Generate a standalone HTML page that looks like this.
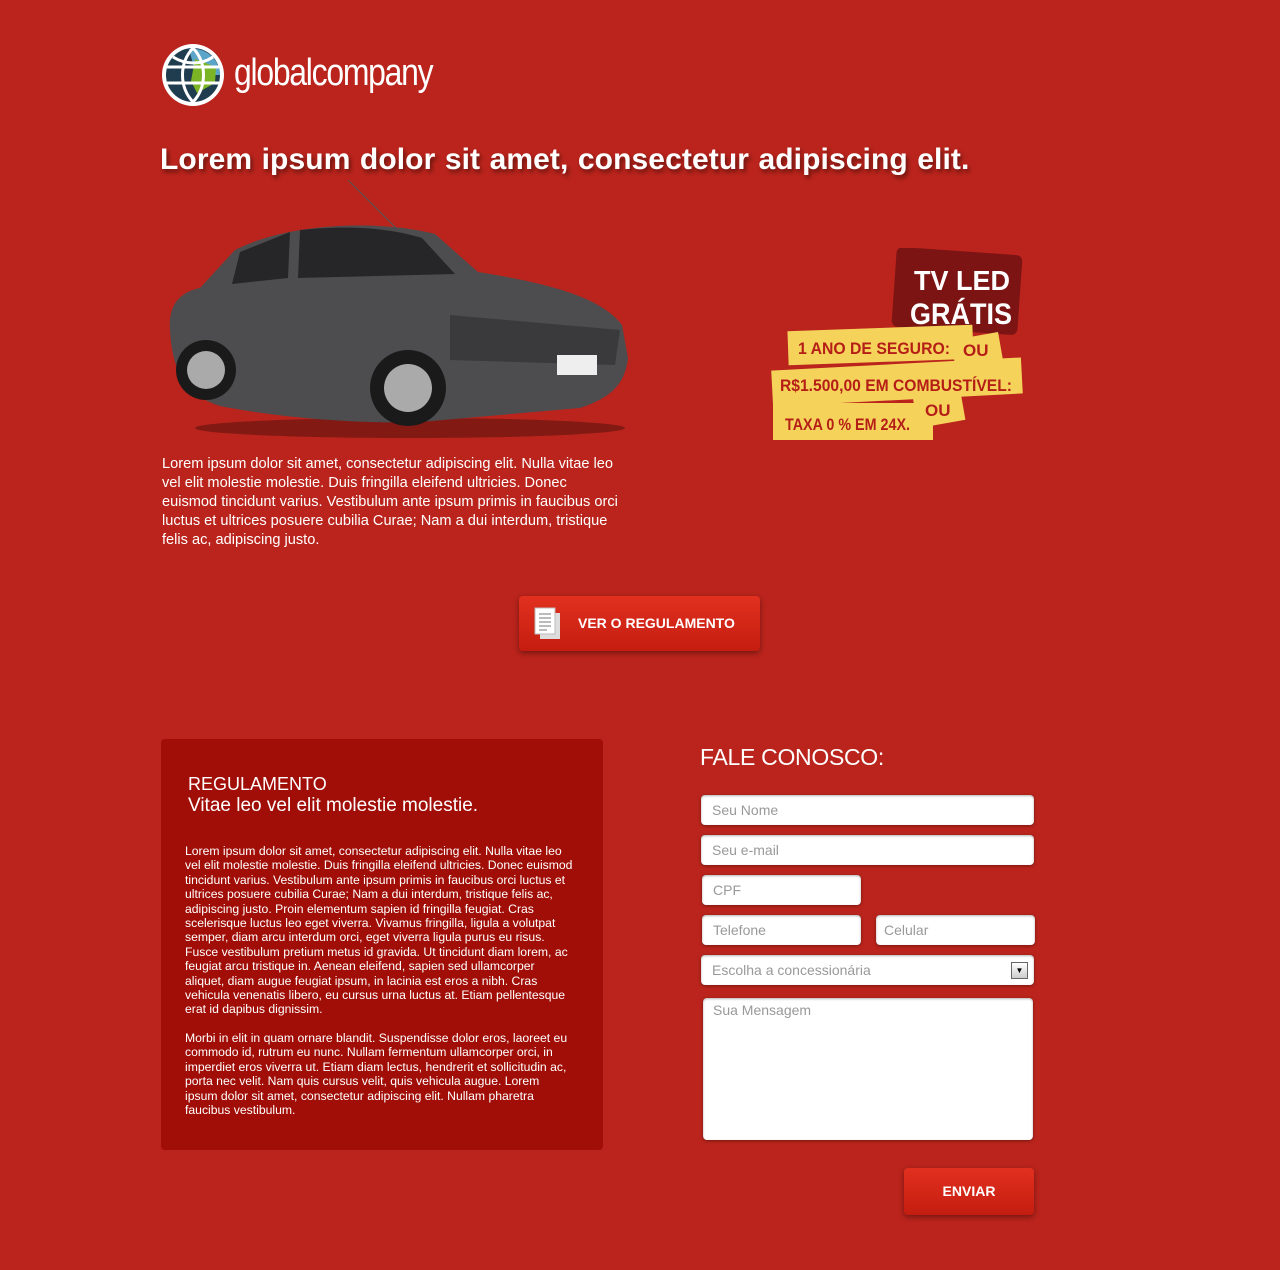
<!DOCTYPE html>
<html><head><meta charset="utf-8"><style>
*{margin:0;padding:0;box-sizing:border-box}
body{width:1280px;height:1270px;background:#ba241c;font-family:"Liberation Sans",sans-serif;color:#fff;position:relative;overflow:hidden}
.abs{position:absolute}
h1{position:absolute;left:160px;top:143px;font-size:30px;font-weight:bold;letter-spacing:0.1px;word-spacing:1px;text-shadow:2px 3px 4px rgba(0,0,0,.45);white-space:nowrap}
.intro{left:162px;top:455px;width:462px;font-size:14.6px;line-height:19px}
.btn{position:absolute;background:linear-gradient(#e2301f,#c41d10);border-radius:4px;box-shadow:0 2px 6px rgba(0,0,0,.4);font-weight:bold;font-size:14px;color:#fff}
.reg{left:161px;top:739px;width:442px;height:411px;background:#a10e07;border-radius:4px;padding:34px 26px 0 27px}
.reg h3{font-weight:normal;font-size:18px;line-height:22px}
.reg h4{font-weight:normal;font-size:19px;line-height:22px}
.reg p{font-size:12.2px;line-height:14.4px;margin-left:-3px;width:388px}
.in{position:absolute;background:#fff;border-radius:4px;box-shadow:inset 0 1px 2px rgba(0,0,0,.3),0 1px 3px rgba(0,0,0,.35);color:#999;font-size:14px;padding:0 0 0 11px;line-height:30px}
.pt{font-family:"Liberation Sans Narrow","Liberation Sans",sans-serif}
</style></head><body>
<svg class="abs" style="left:161px;top:43px" width="66" height="66" viewBox="0 0 66 66">
<circle cx="32" cy="32" r="31" fill="#fff"/>
<circle cx="32" cy="32" r="27" fill="#1f3d4f"/>
<path d="M28 6 A27 27 0 0 1 59 32 L35 32 Z" fill="#5ba6c8"/>
<path d="M34 16 L55 24 L54 40 L36 50 L30 38 Z" fill="#7bb526"/>
<path d="M32 5 C18 20 18 44 32 59 M32 5 C46 20 46 44 32 59 M6 24 H58 M6 40 H58 M12 14 C25 22 40 22 52 14" stroke="#fff" stroke-width="3" fill="none"/>
</svg>
<div class="abs" style="left:234px;top:52px;font-size:38px;letter-spacing:-1.5px;font-family:'Liberation Sans Narrow','Liberation Sans',sans-serif;transform:scaleX(.84);transform-origin:left">globalcompany</div>
<h1>Lorem ipsum dolor sit amet, consectetur adipiscing elit.</h1>
<svg class="abs" style="left:160px;top:180px" width="475" height="265" viewBox="0 0 475 265">
<line x1="188" y1="0" x2="240" y2="52" stroke="#555" stroke-width="1"/>
<ellipse cx="250" cy="248" rx="215" ry="10" fill="rgba(0,0,0,.3)"/>
<path d="M10 150 C8 125 20 112 40 108 L75 70 C130 42 220 40 275 54 L318 92 C380 102 440 115 462 145 L468 178 C465 205 450 218 420 228 L260 242 C200 244 120 238 60 226 C25 215 12 190 10 150 Z" fill="#4d4d4f"/>
<path d="M80 72 L130 52 L128 98 L72 104 Z M140 50 C190 45 230 48 262 58 L295 94 L138 98 Z" fill="#262628"/>
<path d="M290 135 L460 150 L455 185 L290 180 Z" fill="#3a3a3c"/>
<rect x="397" y="175" width="40" height="20" fill="#eee"/>
<circle cx="46" cy="190" r="30" fill="#1a1a1a"/><circle cx="46" cy="190" r="19" fill="#aaa"/>
<circle cx="248" cy="208" r="38" fill="#1a1a1a"/><circle cx="248" cy="208" r="24" fill="#aaa"/>
</svg>
<svg class="abs" style="left:770px;top:248px" width="260" height="200" viewBox="0 0 260 200">
<rect x="124" y="3" width="126" height="80" rx="6" fill="#7d1414" transform="rotate(4 187 43)"/>
<rect x="18" y="80" width="185" height="34" fill="#f5d35b" transform="rotate(-2 110 97)"/>
<rect x="2" y="116" width="250" height="36" fill="#f5d35b" transform="rotate(-3 127 134)"/>
<rect x="3" y="155" width="160" height="37" fill="#f5d35b"/>
<rect x="183" y="88" width="48" height="30" fill="#f5d35b" transform="rotate(-10 207 103)"/>
<rect x="145" y="146" width="48" height="30" fill="#f5d35b" transform="rotate(-10 170 160)"/>
<text x="144" y="42" font-size="28" font-weight="bold" fill="#fff" textLength="96" lengthAdjust="spacingAndGlyphs">TV LED</text>
<text x="140" y="76" font-size="30" font-weight="bold" fill="#fff" textLength="102" lengthAdjust="spacingAndGlyphs">GRÁTIS</text>
<g fill="#b51e16" font-weight="bold">
<text x="28" y="106" font-size="17" textLength="152" lengthAdjust="spacingAndGlyphs">1 ANO DE SEGURO:</text>
<text x="193" y="108" font-size="17">OU</text>
<text x="10" y="143" font-size="17" textLength="232" lengthAdjust="spacingAndGlyphs">R$1.500,00 EM COMBUSTÍVEL:</text>
<text x="15" y="182" font-size="17" textLength="125" lengthAdjust="spacingAndGlyphs">TAXA 0 % EM 24X.</text>
<text x="155" y="168" font-size="17">OU</text></g>
</svg>
<div class="abs intro">Lorem ipsum dolor sit amet, consectetur adipiscing elit. Nulla vitae leo vel elit molestie molestie. Duis fringilla eleifend ultricies. Donec euismod tincidunt varius. Vestibulum ante ipsum primis in faucibus orci luctus et ultrices posuere cubilia Curae; Nam a dui interdum, tristique felis ac, adipiscing justo.</div>
<div class="btn" style="left:519px;top:596px;width:241px;height:55px;line-height:55px;padding-left:59px">VER O REGULAMENTO</div>
<svg class="abs" style="left:534px;top:607px" width="28" height="34"><rect x="6" y="6" width="20" height="26" fill="#ddd"/><rect x="1" y="1" width="20" height="26" fill="#fff" stroke="#bbb"/><g stroke="#777"><path d="M5 7H17M5 11H17M5 15H17M5 19H17M5 23H13"/></g></svg>
<div class="abs reg"><h3>REGULAMENTO</h3><h4>Vitae leo vel elit molestie molestie.</h4>
<p style="margin-top:27px">Lorem ipsum dolor sit amet, consectetur adipiscing elit. Nulla vitae leo vel elit molestie molestie. Duis fringilla eleifend ultricies. Donec euismod tincidunt varius. Vestibulum ante ipsum primis in faucibus orci luctus et ultrices posuere cubilia Curae; Nam a dui interdum, tristique felis ac, adipiscing justo. Proin elementum sapien id fringilla feugiat. Cras scelerisque luctus leo eget viverra. Vivamus fringilla, ligula a volutpat semper, diam arcu interdum orci, eget viverra ligula purus eu risus. Fusce vestibulum pretium metus id gravida. Ut tincidunt diam lorem, ac feugiat arcu tristique in. Aenean eleifend, sapien sed ullamcorper aliquet, diam augue feugiat ipsum, in lacinia est eros a nibh. Cras vehicula venenatis libero, eu cursus urna luctus at. Etiam pellentesque erat id dapibus dignissim.</p>
<p style="margin-top:14px">Morbi in elit in quam ornare blandit. Suspendisse dolor eros, laoreet eu commodo id, rutrum eu nunc. Nullam fermentum ullamcorper orci, in imperdiet eros viverra ut. Etiam diam lectus, hendrerit et sollicitudin ac, porta nec velit. Nam quis cursus velit, quis vehicula augue. Lorem ipsum dolor sit amet, consectetur adipiscing elit. Nullam pharetra faucibus vestibulum.</p></div>
<div class="abs" style="left:700px;top:744px;font-size:23px;letter-spacing:-0.3px">FALE CONOSCO:</div>
<div class="in" style="left:701px;top:795px;width:333px">Seu Nome</div>
<div class="in" style="left:701px;top:835px;width:333px">Seu e-mail</div>
<div class="in" style="left:702px;top:875px;width:159px">CPF</div>
<div class="in" style="left:702px;top:915px;width:159px">Telefone</div>
<div class="in" style="left:876px;top:915px;width:159px;padding-left:8px">Celular</div>
<div class="in" style="left:701px;top:955px;width:333px">Escolha a concessionária</div>
<div class="abs" style="left:1011px;top:962px;width:17px;height:17px;border:1px solid #666;background:linear-gradient(#fff,#ccc);font-size:8px;color:#000;text-align:center;line-height:16px">▼</div>
<div class="in" style="left:703px;top:998px;width:330px;height:142px;line-height:24px;padding-left:10px">Sua Mensagem</div>
<div class="btn" style="left:904px;top:1168px;width:130px;height:47px;line-height:47px;text-align:center">ENVIAR</div>
</body></html>
